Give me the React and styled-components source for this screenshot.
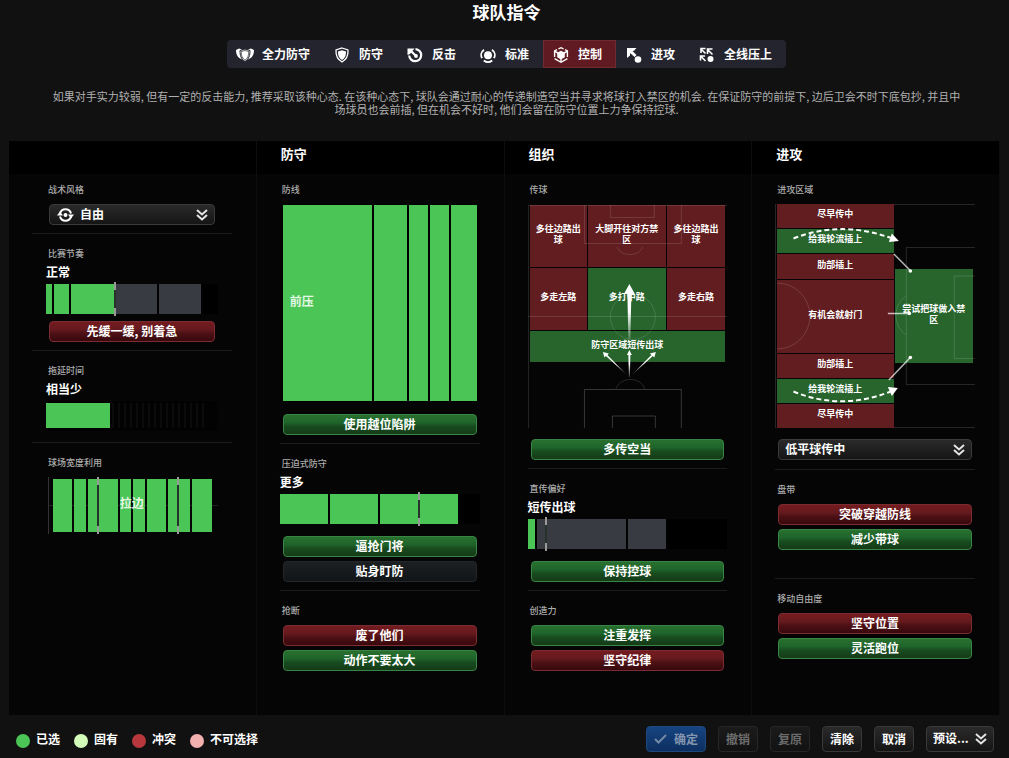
import React, { useState } from "react";
import styled, { createGlobalStyle, css } from "styled-components";

const GlobalStyle = createGlobalStyle`
  * {
    box-sizing: border-box;
  }

  body {
    margin: 0;
    background: #111;
    color: #fff;
    font-family: "Noto Sans CJK SC", sans-serif;
    font-size: 12px;
  }

  button,
  select {
    font-family: inherit;
    font-size: 12px;
    font-weight: 700;
    color: #fff;
    cursor: pointer;
  }
`;

const Page = styled.div`
  min-height: 100vh;
  display: flex;
  flex-direction: column;
`;

const Header = styled.header`
  display: flex;
  flex-direction: column;
  align-items: center;
  padding-left: 4px;
`;

const Title = styled.h1`
  margin: 0;
  font-size: 17px;
  line-height: 24px;
`;

const Tabs = styled.nav`
  display: flex;
  height: 28px;
  margin-top: 16px;
  border-radius: 4px;
  overflow: hidden;
  background: #23242e;
`;

const Tab = styled.button`
  display: flex;
  align-items: center;
  gap: 8px;
  padding: 0 14px 2px 9px;
  border: none;
  background: ${(props) => (props.$active ? "#5f1a22" : "transparent")};
  box-shadow: ${(props) => (props.$active ? "inset 0 0 0 1px #722a31" : "none")};

  svg {
    width: 18px;
    height: 18px;
    margin-top: 3px;
  }
`;

const Desc = styled.p`
  max-width: 952px;
  margin: 22px 0 25px;
  padding: 0 20px;
  font-size: 11px;
  line-height: 13px;
  text-align: center;
  color: #b0b0b0;
`;

const Columns = styled.main`
  flex: 1;
  display: grid;
  grid-template-columns: repeat(4, 1fr);
  margin: 0 9px;
  background: #050505;
`;

const Column = styled.section`
  min-width: 0;
  border-right: 1px solid #0d0d0d;
`;

const ColumnTitle = styled.h2`
  height: 33px;
  margin: 0;
  padding: 0 24px;
  background: #000;
  font-size: 13px;
  line-height: 25px;
`;

const ColumnBody = styled.div`
  padding: 0 24px 24px 23px;
`;

const Section = styled.div`
  padding: 13px ${(props) => props.$inset || 0}px ${(props) => props.$bottom || 8}px;
  border-top: 1px solid #1c1c1c;

  &:first-child {
    padding-top: 9px;
    border-top: none;
  }
`;

const Label = styled.label`
  display: block;
  margin: 0 2px ${(props) => (props.$tight ? 3 : 7)}px;
  font-size: 9px;
  font-weight: 500;
  line-height: 14px;
  color: #adadad;
`;

const Value = styled.div`
  height: 16px;
  margin-bottom: 4px;
  font-weight: 700;
  line-height: 16px;
`;

const Buttons = styled.div`
  display: flex;
  flex-direction: column;
  gap: 4px;
  margin: ${(props) => props.$top || 0}px 3px 0;
`;

const tones = {
  green: css`
    background: linear-gradient(#28702f, #1f642b 40%, #184c1f 60%, #153a17);
    border-color: #398544;
  `,
  red: css`
    background: linear-gradient(#751b1f, #651a1e 40%, #4d1115 60%, #38090d);
    border-color: #7b2c31;
  `,
  dark: css`
    background: linear-gradient(#1d2023, #121518);
    border-color: #25282b;
  `,
};

const Instruction = styled.button`
  height: 21px;
  padding: 0 0 2px;
  border: 1px solid;
  border-radius: 4px;
  line-height: 17px;
  ${(props) => tones[props.$tone]}
`;

const SelectBox = styled.div`
  position: relative;
  margin: ${(props) => (props.$footer ? "0" : `${props.$top || 0}px 3px 0`)};
  width: ${(props) => (props.$footer ? "68px" : "auto")};

  select {
    display: block;
    width: 100%;
    height: ${(props) => (props.$footer ? 26 : 21)}px;
    padding: 0 22px 3px ${(props) => props.$indent || 6}px;
    border: 1px solid #3a3a3a;
    border-radius: 4px;
    background: linear-gradient(#2a2a2a, #151515);
    appearance: none;
  }

  svg {
    position: absolute;
    top: 50%;
    transform: translateY(-50%);
    pointer-events: none;
  }
`;

const Chevron = styled.svg`
  right: 7px;
  width: 12px;
  height: 12px;
`;

const StyleIcon = styled.svg`
  left: 8px;
  width: 17px;
  height: 17px;
`;

const Range = styled.input`
  position: absolute;
  inset: 0;
  width: 100%;
  height: 100%;
  margin: 0;
  opacity: 0;
  cursor: pointer;
`;

const Bar = styled.div`
  position: relative;
  display: flex;
  gap: 2px;
  height: ${(props) => props.$height || 30}px;
  padding: ${(props) => props.$pad || "0"};
  background: ${(props) => props.$back || "#020202"};
`;

const segmentColors = { on: "#4ac556", off: "#393b42", empty: "#000" };

const Segment = styled.span`
  position: relative;
  flex: ${(props) => props.$size} 1 0;
  display: flex;
  align-items: center;
  background: ${(props) => segmentColors[props.$kind]};

  ${(props) =>
    props.$tick &&
    css`
      &::after {
        content: "";
        position: absolute;
        top: -2px;
        bottom: -2px;
        right: -2px;
        width: 2px;
        background: linear-gradient(#999 8px, #26332a 8px calc(100% - 8px), #999 calc(100% - 8px));
      }
    `}
`;

const Stripes = styled.span`
  flex: 97 1 0;
  background: repeating-linear-gradient(90deg, #0b0b0b 0 2px, #020202 2px 6px);
`;

const LineText = styled.strong`
  padding: 0 0 4px 7px;
  line-height: 18px;
  color: #e4f7e4;
`;

const WidthText = styled.strong`
  position: absolute;
  inset: 0;
  display: flex;
  align-items: center;
  justify-content: center;
  padding-bottom: 6px;
  color: #e4f7e4;
`;

const Pitch = styled.div`
  position: relative;
  height: 224px;

  > svg {
    position: absolute;
    inset: 0;
    width: 100%;
    height: 100%;
    pointer-events: none;
  }
`;

const PassingGrid = styled.div`
  display: grid;
  grid-template-columns: 58fr 78fr 59fr;
  grid-template-rows: 62px 62px 31px;
  gap: 1px;
  padding: 1px 2px 0;
`;

const AttackGrid = styled.div`
  display: grid;
  grid-template-columns: 117fr 79fr;
  align-items: center;
  gap: 1px;
  padding: 0 2px;
`;

const Lanes = styled.div`
  display: grid;
  grid-template-rows: 24px 24px 25px 73px 24px 24px 24px;
  gap: 1px;
`;

const Zone = styled.button`
  min-width: 0;
  height: ${(props) => (props.$box ? "94px" : "auto")};
  grid-column: ${(props) => (props.$wide ? "1 / -1" : "auto")};
  padding: 0 5px 5px;
  border: none;
  background: ${(props) => (props.$on ? "#27652d" : "#621d20")};
  font-size: 9px;
  line-height: 11px;
`;

const Footer = styled.footer`
  display: flex;
  align-items: center;
  justify-content: space-between;
  height: 43px;
  padding: 9px 15px 0 16px;
`;

const Legend = styled.ul`
  display: flex;
  gap: 14px;
  margin: 0;
  padding: 0;
  list-style: none;
  font-weight: 700;
  line-height: 18px;
`;

const LegendItem = styled.li`
  display: flex;
  align-items: center;
  gap: 6px;
  padding-bottom: 4px;

  &::before {
    content: "";
    width: 14px;
    height: 14px;
    margin-top: 3px;
    border-radius: 50%;
    background: ${(props) => props.$color};
  }
`;

const Actions = styled.div`
  display: flex;
  gap: 12px;
  margin-bottom: 4px;
`;

const Action = styled.button`
  display: flex;
  align-items: center;
  justify-content: center;
  gap: 7px;
  width: ${(props) => (props.$primary ? 60 : 40)}px;
  height: 26px;
  padding: 0 0 2px;
  border: 1px solid ${(props) => (props.$primary ? "#1c4a80" : "#383838")};
  border-radius: 4px;
  background: ${(props) =>
    props.$primary
      ? "linear-gradient(#164480, #0d2f60)"
      : "linear-gradient(#2a2a2a, #141414)"};

  &:disabled {
    color: ${(props) => (props.$primary ? "#8495af" : "#6c6c6c")};
    border-color: ${(props) => (props.$primary ? "#1c4a80" : "#262626")};
    background: ${(props) => (props.$primary ? "" : "linear-gradient(#1b1b1b, #121212)")};
    cursor: default;
  }
`;

const icons = {
  contain: (
    <svg viewBox="0 0 18 18" fill="#fff">
      <path d="M0 4l3-1.500 3 1-1 2v4l1 4C2 12 0 9 0 4zM18 4l-3-1.500-3 1 1 2v4l-1 4c4-1.500 6-4.500 6-9.500z" />
      <path d="M9 3l5 1.500c0 5-1 8.500-5 11-4-2.500-5-6-5-11z" stroke="#23242e" />
      <path d="M9 4.500l3.800 1c0 4-1 6.700-3.800 8.800-2.800-2.100-3.800-4.800-3.800-8.800z" fill="none" stroke="#23242e" strokeWidth=".7" />
    </svg>
  ),
  defend: (
    <svg viewBox="0 0 18 18">
      <path d="M9 2l6 2c.3 5.500-1.500 9.500-6 12-4.500-2.500-6.300-6.500-6-12z" fill="none" stroke="#fff" strokeWidth="1.300" />
      <path d="M9 4.200l4 1.300c.2 4-1 6.500-4 8.500-3-2-4.200-4.500-4-8.500z" fill="#fff" />
    </svg>
  ),
  counter: (
    <svg viewBox="0 0 18 18" fill="none" stroke="#fff">
      <path d="M9.500 3.200a6 6 0 1 1-6.300 6.300" strokeWidth="2.200" />
      <path d="M5 5l5 5" strokeWidth="2.200" />
      <path d="M1.500 2.500h7L6.500 5 4 8l-2.500 1z" fill="#fff" stroke="none" />
      <circle cx="10" cy="10" r="1.900" fill="#fff" stroke="none" />
    </svg>
  ),
  standard: (
    <svg viewBox="0 0 18 18" fill="none" stroke="#fff" strokeWidth="1.800">
      <circle cx="9" cy="9.200" r="4" fill="#fff" stroke="none" />
      <path d="M5 3.700a6.700 6.700 0 0 0-2 8.500M13 3.700a6.700 6.700 0 0 1 2 8.500M4.800 14.500a6.800 6.800 0 0 0 8.400 0" />
    </svg>
  ),
  control: (
    <svg viewBox="0 0 18 18" fill="none" stroke="#fff" strokeWidth="1.400">
      <path d="M6.500 2.900L9 1.700l2.500 1.200M13 3.700l2.400 1.300v6M15.400 12.600L9 16.300l-6.400-3.700M2.600 11V5L5 3.700" />
      <path d="M3 5.500l3 1.500M15 5.500l-3 1.500M9 12.500V16" />
      <path d="M9 4.800l3.800 2v4.400L9 13.500l-3.800-2.300V6.800z" fill="#fff" stroke="none" />
    </svg>
  ),
  attack: (
    <svg viewBox="0 0 18 18" fill="#fff">
      <path d="M2 2h9.500L9 4.800 7.500 5l4 4-2 2-4.300-4L5 9.500 2 12z" />
      <circle cx="13" cy="13.500" r="3.300" />
    </svg>
  ),
  overload: (
    <svg viewBox="0 0 18 18" fill="none" stroke="#fff" strokeWidth="1.600">
      <path d="M14.500 8.500L9.800 3.800M9.500 8V3h5M7.500 7.500L3 3M3 7V2.500h4.500M7.500 15L2.800 10.300M2.500 14.500V10h4.500" />
      <circle cx="12.500" cy="13" r="3" fill="#fff" stroke="none" />
    </svg>
  ),
};

const mentalities = [
  ["contain", "全力防守"],
  ["defend", "防守"],
  ["counter", "反击"],
  ["standard", "标准"],
  ["control", "控制"],
  ["attack", "进攻"],
  ["overload", "全线压上"],
];

const Dropdown = ({ id, label, options, icon, ...rest }) => (
  <SelectBox {...rest}>
    <select id={id} aria-label={label}>
      {options.map((v) => (
        <option key={v}>{v}</option>
      ))}
    </select>
    {icon}
    <Chevron viewBox="0 0 12 12" fill="none" stroke="#e4e4e4" strokeWidth="2">
      <path d="M1 1l5 4.500L11 1M1 6l5 4.500L11 6" />
    </Chevron>
  </SelectBox>
);

// segments: [size, kind, tick]
const SegmentBar = ({ id, segments, value, children, ...rest }) => (
  <Bar {...rest}>
    {segments.map(([size, kind, tick], i) => (
      <Segment key={i} $size={size} $kind={kind} $tick={tick}>
        {i === 0 && children}
      </Segment>
    ))}
    <Range id={id} type="range" min="0" max={segments.length} defaultValue={value} />
  </Bar>
);

const InstructionList = ({ items, top }) => (
  <Buttons $top={top}>
    {items.map(([tone, text]) => (
      <Instruction key={text} type="button" $tone={tone}>
        {text}
      </Instruction>
    ))}
  </Buttons>
);

const widths = [19, 11, 9, 19, 11, 11, 19, 9, 11, 19];

const GeneralColumn = () => (
  <Column>
    <ColumnTitle />
    <ColumnBody>
      <Section $inset={14}>
        <Label htmlFor="style">战术风格</Label>
        <Dropdown
          id="style"
          options={["自由"]}
          $indent={30}
          icon={
            <StyleIcon viewBox="0 0 17 17" fill="none" stroke="#fff" strokeWidth="2">
              <path d="M3 7a5.700 5.700 0 0 1 11 0M3 10a5.700 5.700 0 0 0 11 0" />
              <path d="M0 9l3-4 3 4zM11 8h6l-3 4z" fill="#fff" stroke="none" />
              <circle cx="8.500" cy="8.500" r="2" fill="#fff" stroke="none" />
            </StyleIcon>
          }
        />
      </Section>
      <Section $inset={14}>
        <Label htmlFor="tempo" $tight>比赛节奏</Label>
        <Value>正常</Value>
        <SegmentBar
          id="tempo"
          value={3}
          segments={[[6, "on"], [15, "on"], [42, "on", true], [41, "off"], [41, "off"], [15, "empty"]]}
        />
        <InstructionList top={7} items={[["red", "先缓一缓, 别着急"]]} />
      </Section>
      <Section $inset={14} $bottom={11}>
        <Label htmlFor="wasting" $tight>拖延时间</Label>
        <Value>相当少</Value>
        <Bar $pad="2px 10px 3px 0">
          <Segment $size={64} $kind="on" />
          <Stripes />
          <Range id="wasting" type="range" defaultValue="40" />
        </Bar>
      </Section>
      <Section $inset={14}>
        <Label htmlFor="width">球场宽度利用</Label>
        <Bar
          $height={57}
          $pad="2px 6px 2px 7px"
          $back="linear-gradient(#333, #333) 2px 0 / 1px 100% no-repeat, linear-gradient(#222, #222) 2px 50% / 100% 1px no-repeat"
        >
          {widths.map((w, i) => (
            <Segment key={i} $size={w} $kind="on" $tick={i === 2 || i === 7} />
          ))}
          <WidthText>拉边</WidthText>
          <Range id="width" type="range" defaultValue="100" />
        </Bar>
      </Section>
    </ColumnBody>
  </Column>
);

const DefenceColumn = () => (
  <Column>
    <ColumnTitle>防守</ColumnTitle>
    <ColumnBody>
      <Section>
        <Label htmlFor="line">防线</Label>
        <SegmentBar
          id="line"
          value={5}
          $height={198}
          $pad="1px 2px 1px 3px"
          segments={[[89, "on"], [33, "on"], [19, "on"], [19, "on"], [27, "on"]]}
        >
          <LineText>前压</LineText>
        </SegmentBar>
        <InstructionList top={12} items={[["green", "使用越位陷阱"]]} />
      </Section>
      <Section>
        <Label htmlFor="closing" $tight>压迫式防守</Label>
        <Value>更多</Value>
        <SegmentBar
          id="closing"
          value={4}
          segments={[[48, "on"], [48, "on"], [38, "on", true], [38, "on"], [20, "empty"]]}
        />
        <InstructionList top={12} items={[["green", "逼抢门将"], ["dark", "贴身盯防"]]} />
      </Section>
      <Section>
        <Label as="h3">抢断</Label>
        <InstructionList items={[["red", "废了他们"], ["green", "动作不要太大"]]} />
      </Section>
    </ColumnBody>
  </Column>
);

const BuildUpColumn = () => (
  <Column>
    <ColumnTitle>组织</ColumnTitle>
    <ColumnBody>
      <Section>
        <Label as="h3">传球</Label>
        <Pitch>
          <PassingGrid>
            <Zone>多往边路出球</Zone>
            <Zone>大脚开往对方禁区</Zone>
            <Zone>多往边路出球</Zone>
            <Zone>多走左路</Zone>
            <Zone $on>多打中路</Zone>
            <Zone>多走右路</Zone>
            <Zone $on $wide>防守区域短传出球</Zone>
          </PassingGrid>
          <svg viewBox="0 0 200 224" preserveAspectRatio="none" fill="none">
            <defs>
              <linearGradient id="fade" x1="0" y1="0" x2="0" y2="1">
                <stop offset="0.5" stopColor="#fff" />
                <stop offset="1" stopColor="#fff" stopOpacity="0.2" />
              </linearGradient>
            </defs>
            <g stroke="#fff" strokeOpacity=".13">
              <path d="M.5 224V1.500H200M56.500 1v38.500h97V1M82.500 1v12.500h44V1M0 112.500h200" />
              <path d="M89 43a14 12 0 0 0 26 0M88 185a15 13 0 0 1 29 0" />
              <circle cx="105" cy="113" r="22.500" />
              <path strokeOpacity=".2" d="M56.500 224v-38.500h97V224M84.500 224v-12h43v12" />
            </g>
            <path d="M101.500 80l5.500 10h-3.500L102.500 135h-2L99.500 90H96z" fill="url(#fade)" />
            <path d="M101.500 146l2.500 5h-1.500l-.5 22h-1l-.5-22H99z" fill="url(#fade)" />
            <path d="M75 148l6 1.500-1.500 1.500L99 171 78 152l-1.500 1.500zM128 148l-6 1.500 1.500 1.500L104 171l21-19 1.500 1.500z" fill="url(#fade)" />
          </svg>
        </Pitch>
        <InstructionList top={11} items={[["green", "多传空当"]]} />
      </Section>
      <Section>
        <Label htmlFor="direct" $tight>直传偏好</Label>
        <Value>短传出球</Value>
        <SegmentBar
          id="direct"
          value={1}
          segments={[[8, "on"], [8, "off", true], [79, "off"], [38, "off"], [59, "empty"]]}
        />
        <InstructionList top={12} items={[["green", "保持控球"]]} />
      </Section>
      <Section>
        <Label as="h3">创造力</Label>
        <InstructionList items={[["green", "注重发挥"], ["red", "坚守纪律"]]} />
      </Section>
    </ColumnBody>
  </Column>
);

const AttackColumn = () => (
  <Column>
    <ColumnTitle>进攻</ColumnTitle>
    <ColumnBody>
      <Section $bottom={9}>
        <Label as="h3">进攻区域</Label>
        <Pitch>
          <AttackGrid>
            <Lanes>
              <Zone>尽早传中</Zone>
              <Zone $on>给我轮流插上</Zone>
              <Zone>肋部插上</Zone>
              <Zone>有机会就射门</Zone>
              <Zone>肋部插上</Zone>
              <Zone $on>给我轮流插上</Zone>
              <Zone>尽早传中</Zone>
            </Lanes>
            <Zone $on $box>尝试把球做入禁区</Zone>
          </AttackGrid>
          <svg viewBox="0 0 200 224" preserveAspectRatio="none" fill="none">
            <g stroke="#fff" strokeOpacity=".14">
              <path d="M.5 0v224M119 .5h81M119 223.500h81M200 43.500h-68.500v137H200M200 72h-20.500v82.500H200" />
              <path d="M2 79a33 33 0 0 1 0 66M131 92a24 24 0 0 0 0 39" />
            </g>
            <g stroke="#fff" strokeWidth="2" strokeDasharray="5 3">
              <path d="M18.500 34.500Q66 16 116 34" />
              <path d="M18.500 187.500Q66 207 116 187.500" />
            </g>
            <path d="M117 29.500l7 7.500-10 1zM113 183l10 1-6 8z" fill="#fff" />
            <g stroke="#fff" strokeOpacity=".7" strokeWidth="1.500">
              <path d="M119 50l16 16M113 109.500h21M114 176l21-22" />
            </g>
            <g fill="#fff">
              <circle cx="135.500" cy="67" r="1.800" />
              <circle cx="134.500" cy="109.500" r="1.800" />
              <circle cx="135.500" cy="153.500" r="1.800" />
            </g>
          </svg>
        </Pitch>
        <Dropdown label="传中方式" options={["低平球传中"]} $top={11} />
      </Section>
      <Section $bottom={28}>
        <Label as="h3">盘带</Label>
        <InstructionList items={[["red", "突破穿越防线"], ["green", "减少带球"]]} />
      </Section>
      <Section>
        <Label as="h3">移动自由度</Label>
        <InstructionList items={[["red", "坚守位置"], ["green", "灵活跑位"]]} />
      </Section>
    </ColumnBody>
  </Column>
);

const App = () => {
  const [mentality, setMentality] = useState("control");

  return (
    <>
      <GlobalStyle />
      <Page>
        <Header>
          <Title>球队指令</Title>
          <Tabs>
            {mentalities.map(([key, text]) => (
              <Tab
                key={key}
                type="button"
                $active={key === mentality}
                aria-pressed={key === mentality}
                onClick={() => setMentality(key)}
              >
                {icons[key]}
                {text}
              </Tab>
            ))}
          </Tabs>
          <Desc>
            如果对手实力较弱, 但有一定的反击能力, 推荐采取该种心态. 在该种心态下,
            球队会通过耐心的传递制造空当并寻求将球打入禁区的机会. 在保证防守的前提下,
            边后卫会不时下底包抄, 并且中场球员也会前插, 但在机会不好时,
            他们会留在防守位置上力争保持控球.
          </Desc>
        </Header>
        <Columns>
          <GeneralColumn />
          <DefenceColumn />
          <BuildUpColumn />
          <AttackColumn />
        </Columns>
        <Footer>
          <Legend>
            <LegendItem $color="#4ac556">已选</LegendItem>
            <LegendItem $color="#d3fbb9">固有</LegendItem>
            <LegendItem $color="#b8373c">冲突</LegendItem>
            <LegendItem $color="#f2b0ae">不可选择</LegendItem>
          </Legend>
          <Actions>
            <Action type="button" $primary disabled>
              <svg width="13" height="11" viewBox="0 0 13 11" fill="none" stroke="#7387a6" strokeWidth="2">
                <path d="M1 6l3.500 3.500L12 2" />
              </svg>
              确定
            </Action>
            <Action type="button" disabled>撤销</Action>
            <Action type="button" disabled>复原</Action>
            <Action type="button">清除</Action>
            <Action type="button">取消</Action>
            <Dropdown label="预设" options={["预设..."]} $footer />
          </Actions>
        </Footer>
      </Page>
    </>
  );
};

export default App;
